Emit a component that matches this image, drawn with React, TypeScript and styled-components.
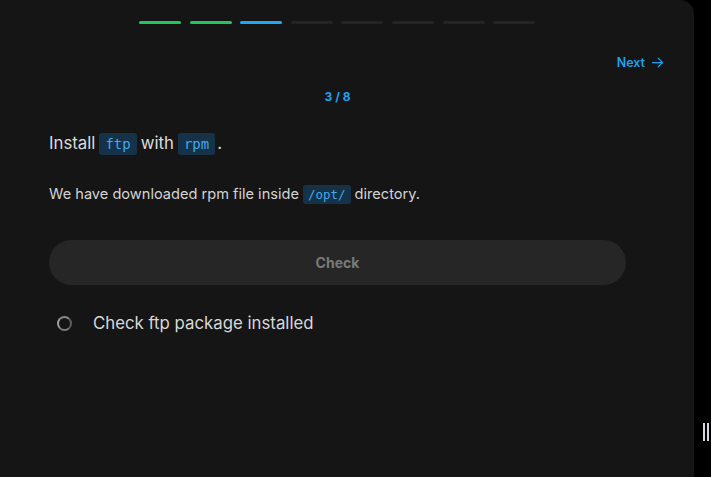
import React from 'react';
import styled, { createGlobalStyle } from 'styled-components';

const Global = createGlobalStyle`
  html, body {
    margin: 0;
    padding: 0;
    background: #000;
    font-family: Inter, "Noto Sans", sans-serif;
  }
`;

const Page = styled.div`
  display: flex;
  width: 711px;
  height: 477px;
  background: #000;
`;

const Panel = styled.div`
  position: relative;
  width: 694px;
  height: 477px;
  background: #151515;
  border-top-right-radius: 14px;
  box-sizing: border-box;
  display: flex;
  flex-direction: column;
`;

const Progress = styled.div`
  display: flex;
  gap: 8.6px;
  padding: 21px 0 0 139px;
`;

const Step = styled.div<{ $state: 'done' | 'current' | 'todo' }>`
  width: 42px;
  height: 3px;
  border-radius: 2px;
  background: ${(p) =>
    p.$state === 'done' ? '#22c55e' : p.$state === 'current' ? '#1ea7f5' : '#242424'};
`;

const TopRow = styled.div`
  display: flex;
  justify-content: flex-end;
  padding: 31px 29px 0 0;
`;

const NextButton = styled.button`
  display: flex;
  align-items: center;
  gap: 5px;
  background: none;
  border: none;
  padding: 0;
  color: #1ea1f0;
  font-family: Inter, sans-serif;
  font-size: 12.5px;
  font-weight: 600;
  cursor: pointer;
`;

const Content = styled.div`
  width: 577px;
  margin-left: 49px;
  display: flex;
  flex-direction: column;
`;

const Counter = styled.div`
  text-align: center;
  color: #1ea1f0;
  font-size: 12px;
  font-weight: 700;
  margin-top: 19px;
`;

const Title = styled.div`
  color: #dcdcdc;
  font-size: 16.8px;
  margin-top: 27px;
  line-height: 24px;
`;

const Desc = styled.div`
  color: #d4d4d4;
  font-size: 14.6px;
  margin-top: 27px;
  line-height: 24px;
`;

const Code = styled.code<{ $small?: boolean; $tight?: boolean }>`
  display: inline-block;
  background: #163249;
  color: #3fa8f0;
  font-family: "DejaVu Sans Mono", monospace;
  font-size: ${(p) => (p.$small ? '12.5px' : '14px')};
  line-height: ${(p) => (p.$small ? '19px' : '22px')};
  padding: ${(p) => (p.$small ? '0 5px' : '0 6px')};
  border-radius: 3px;
  margin: 0 ${(p) => (p.$tight ? '2px' : '4px')} 0 4px;
  vertical-align: baseline;
`;

const CheckButton = styled.button`
  margin-top: 34px;
  height: 45px;
  width: 577px;
  border: none;
  border-radius: 23px;
  background: #262626;
  color: #7a7a7a;
  font-family: Inter, sans-serif;
  font-size: 14px;
  font-weight: 700;
`;

const TaskRow = styled.div`
  display: flex;
  align-items: center;
  gap: 21px;
  margin-top: 28px;
  padding-left: 8px;
  color: #d8d8d8;
  font-size: 16.8px;
`;

const Ring = styled.div`
  width: 11px;
  height: 11px;
  border-radius: 50%;
  border: 2.5px solid #5e5e5e;
  border-left-color: #a0a0a0;
  border-top-color: #888;
  border-bottom-color: #7a7a7a;
`;

const Handle = styled.div`
  position: absolute;
  right: -15px;
  top: 423px;
  display: flex;
  gap: 2px;
`;

const HandleBar = styled.div`
  width: 2px;
  height: 18px;
  background: #d4d8e0;
`;

export default function App() {
  const steps: ('done' | 'current' | 'todo')[] = ['done', 'done', 'current', 'todo', 'todo', 'todo', 'todo', 'todo'];
  return (
    <>
      <Global />
      <Page>
        <Panel>
          <Progress>
            {steps.map((s, i) => (
              <Step key={i} $state={s} />
            ))}
          </Progress>
          <TopRow>
            <NextButton>
              Next
              <svg width="15" height="15" viewBox="0 0 24 24" fill="none" stroke="currentColor" strokeWidth="2" strokeLinecap="round" strokeLinejoin="round">
                <path d="M4 12h16" />
                <path d="M13 5l7 7-7 7" />
              </svg>
            </NextButton>
          </TopRow>
          <Content>
            <Counter>3 / 8</Counter>
            <Title>
              Install<Code>ftp</Code>with<Code $tight>rpm</Code>.
            </Title>
            <Desc>
              We have downloaded rpm file inside<Code $small>/opt/</Code>directory.
            </Desc>
            <CheckButton>Check</CheckButton>
            <TaskRow>
              <Ring />
              Check ftp package installed
            </TaskRow>
          </Content>
          <Handle>
            <HandleBar />
            <HandleBar />
          </Handle>
        </Panel>
      </Page>
    </>
  );
}
